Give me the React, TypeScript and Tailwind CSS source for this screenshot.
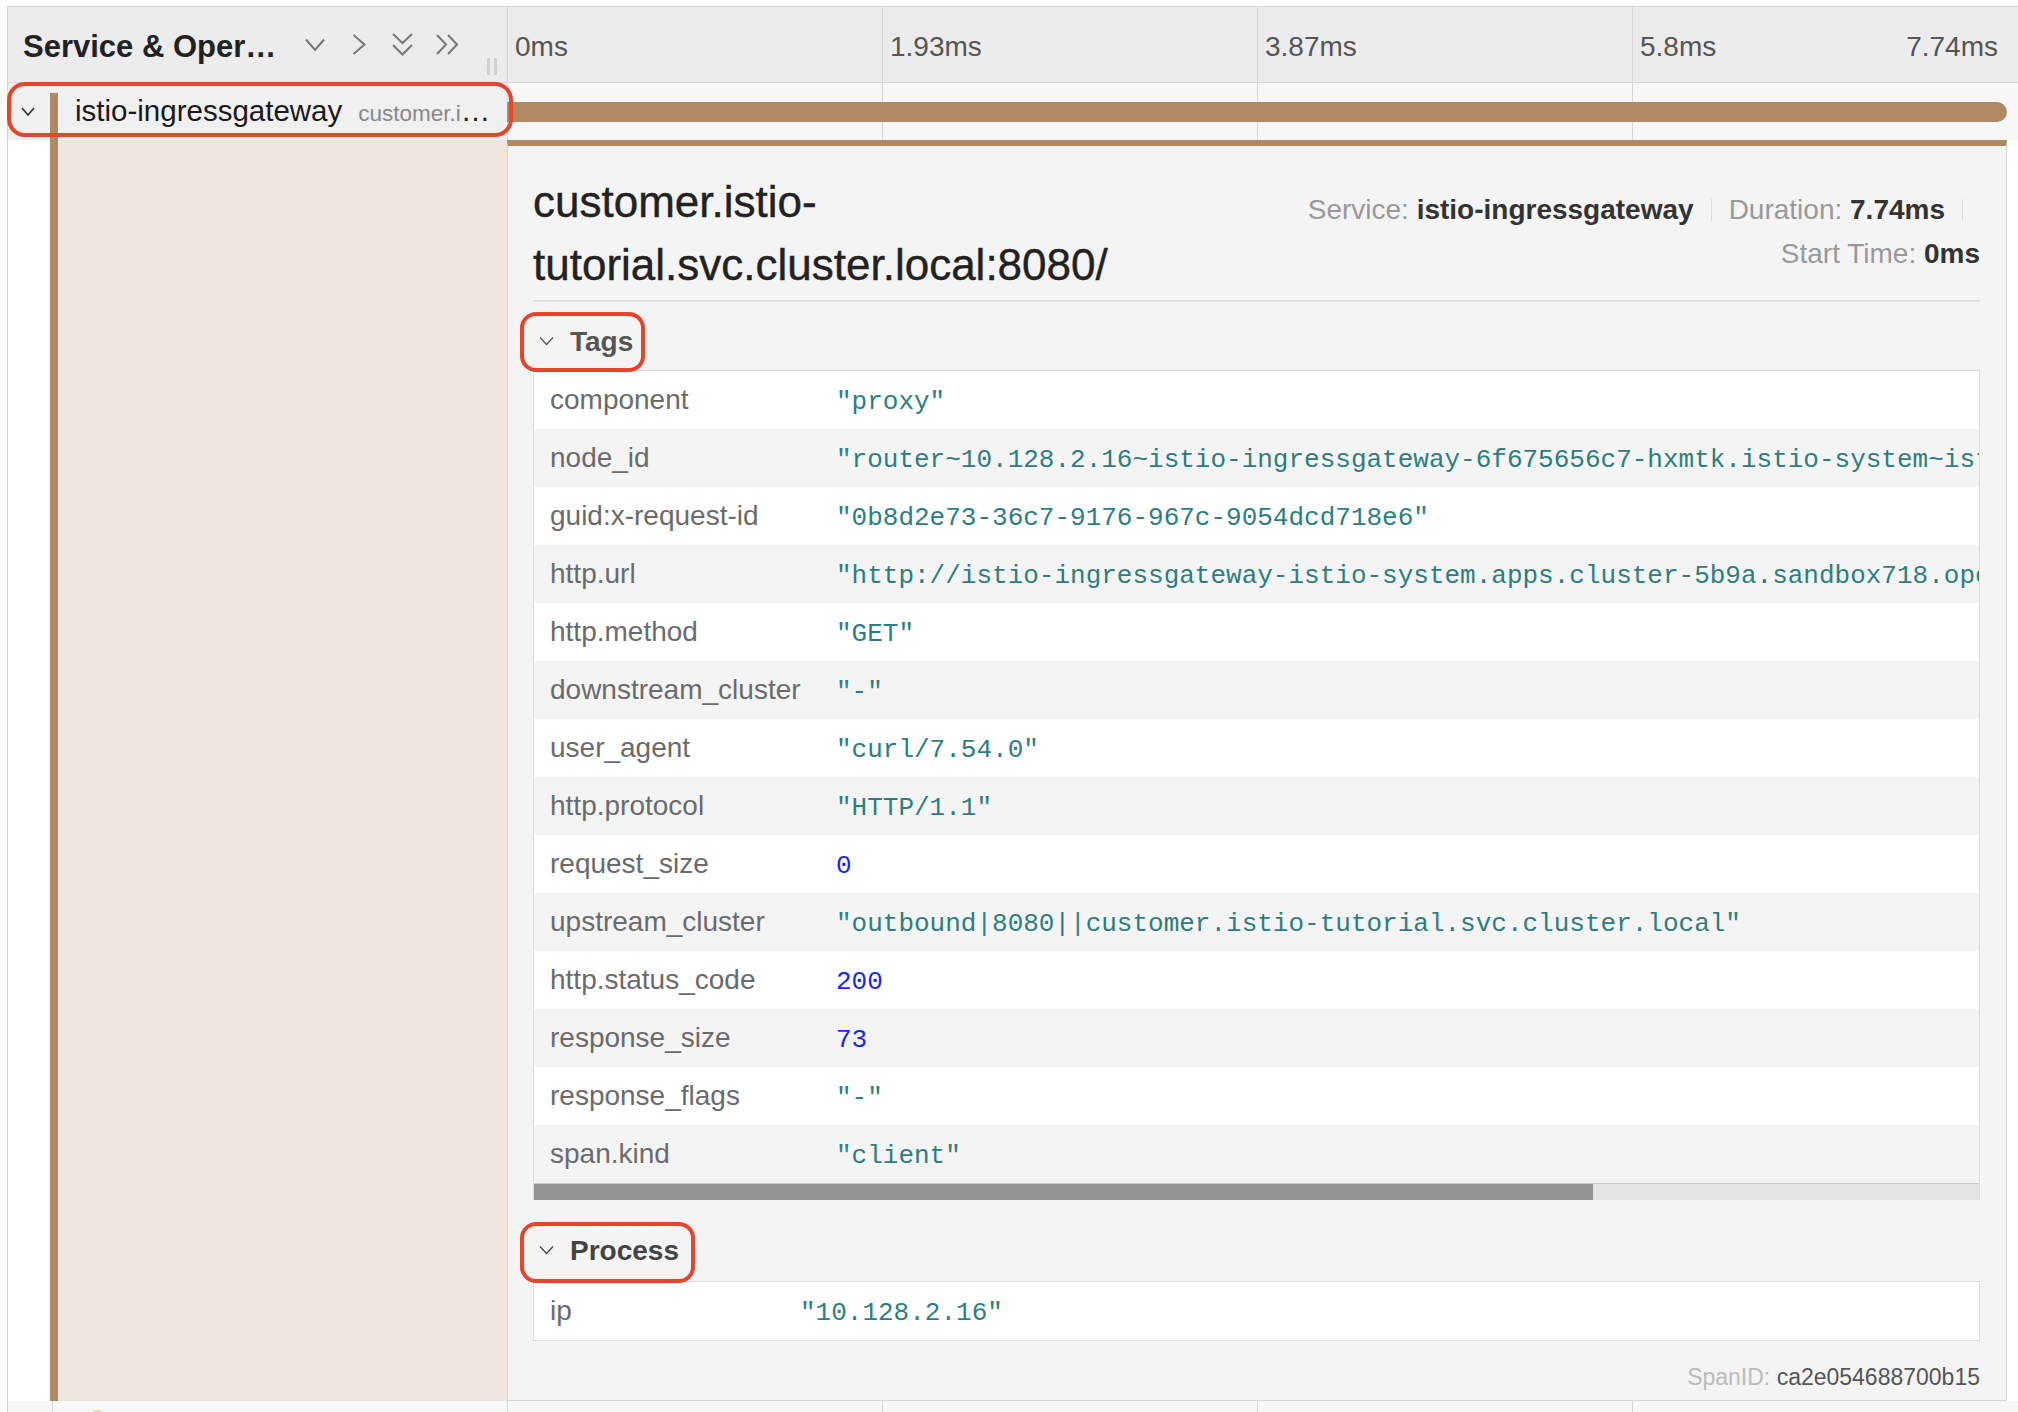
import React from "react";

type Tag = { k: string; v: string; num?: boolean };

const tags: Tag[] = [
  { k: "component", v: '"proxy"' },
  {
    k: "node_id",
    v: '"router~10.128.2.16~istio-ingressgateway-6f675656c7-hxmtk.istio-system~istio-system.svc.cluster.local"',
  },
  { k: "guid:x-request-id", v: '"0b8d2e73-36c7-9176-967c-9054dcd718e6"' },
  {
    k: "http.url",
    v: '"http://istio-ingressgateway-istio-system.apps.cluster-5b9a.sandbox718.opentlc.com/"',
  },
  { k: "http.method", v: '"GET"' },
  { k: "downstream_cluster", v: '"-"' },
  { k: "user_agent", v: '"curl/7.54.0"' },
  { k: "http.protocol", v: '"HTTP/1.1"' },
  { k: "request_size", v: "0", num: true },
  { k: "upstream_cluster", v: '"outbound|8080||customer.istio-tutorial.svc.cluster.local"' },
  { k: "http.status_code", v: "200", num: true },
  { k: "response_size", v: "73", num: true },
  { k: "response_flags", v: '"-"' },
  { k: "span.kind", v: '"client"' },
];

function SmallChevron({ className }: { className?: string }) {
  return (
    <svg className={className} width="15" height="10" viewBox="0 0 15 10" fill="none">
      <path d="M1 1.5 L7.5 8.5 L14 1.5" stroke="currentColor" strokeWidth="1.3" />
    </svg>
  );
}

function HeaderIcons() {
  return (
    <div className="flex items-center text-[#777]">
      <svg width="20" height="14" viewBox="0 0 20 14" fill="none" className="ml-[20px]">
        <path d="M1 1.5 L10 12 L19 1.5" stroke="currentColor" strokeWidth="2" />
      </svg>
      <svg width="14" height="21" viewBox="0 0 14 21" fill="none" className="ml-[27px]">
        <path d="M1.5 1 L12.5 10.5 L1.5 20" stroke="currentColor" strokeWidth="2" />
      </svg>
      <svg width="21" height="23" viewBox="0 0 21 23" fill="none" className="ml-[26px]">
        <path d="M1 1 L10.5 10 L20 1 M1 12 L10.5 21.5 L20 12" stroke="currentColor" strokeWidth="2" />
      </svg>
      <svg width="22" height="21" viewBox="0 0 22 21" fill="none" className="ml-[23px]">
        <path d="M1 1 L10 10.5 L1 20 M12 1 L21 10.5 L12 20" stroke="currentColor" strokeWidth="2" />
      </svg>
    </div>
  );
}

function KeyValueRow({ tag, striped, keyWidth }: { tag: Tag; striped: boolean; keyWidth: string }) {
  return (
    <div className={`flex h-[58px] items-center ${striped ? "bg-[#f4f4f4]" : "bg-white"}`}>
      <div className={`${keyWidth} shrink-0 pl-[16px] text-[28px] text-[#6b6b6b]`}>{tag.k}</div>
      <div
        className={`whitespace-nowrap pt-[4px] font-['Liberation_Mono',monospace] text-[26px] ${
          tag.num ? "text-[#1b26ee]" : "text-[#2c7f7e]"
        }`}
      >
        {tag.v}
      </div>
    </div>
  );
}

function TickLines() {
  return (
    <div className="grid h-full grid-cols-4">
      <div className="border-l border-[#d6d6d6]" />
      <div className="border-l border-[#d6d6d6]" />
      <div className="border-l border-[#d6d6d6]" />
      <div className="border-l border-[#d6d6d6]" />
    </div>
  );
}

export default function App() {
  return (
    <div className="min-h-screen overflow-hidden bg-white pl-[7px] pt-[6px] font-['Liberation_Sans',Arial,sans-serif]">
      <div className="border-l border-t border-[#d6d6d6]">
        {/* header */}
        <div className="flex h-[76px] border-b border-[#d6d6d6] bg-[#ececec]">
          <div className="flex w-[499px] shrink-0 items-center pl-[15px]">
            <div className="w-[262px] truncate pt-[5px] text-[31px] font-bold text-[#222]">
              Service &amp; Operation
            </div>
            <HeaderIcons />
            <div className="mb-[7px] ml-[29px] flex gap-[4px] self-end">
              <div className="h-[17px] w-[3px] bg-[#cfcfcf]" />
              <div className="h-[17px] w-[3px] bg-[#cfcfcf]" />
            </div>
          </div>
          <div className="flex-1 pr-[11px]">
            <div className="grid h-full grid-cols-4 text-[28px] leading-[32px] text-[#555]">
              <div className="border-l border-[#d6d6d6] pl-[7px] pt-[24px]">0ms</div>
              <div className="border-l border-[#d6d6d6] pl-[7px] pt-[24px]">1.93ms</div>
              <div className="border-l border-[#d6d6d6] pl-[7px] pt-[24px]">3.87ms</div>
              <div className="flex justify-between border-l border-[#d6d6d6] pl-[7px] pr-[9px] pt-[24px]">
                <span>5.8ms</span>
                <span>7.74ms</span>
              </div>
            </div>
          </div>
        </div>

        {/* span row */}
        <div className="flex h-[57px]">
          <div className="relative flex w-[499px] shrink-0 bg-[#f0f0f0]">
            <div className="flex items-center pl-[13px] text-[#333]">
              <svg width="14" height="9" viewBox="0 0 14 9" fill="none">
                <path d="M1 1 L7 8 L13 1" stroke="currentColor" strokeWidth="1.6" />
              </svg>
            </div>
            <div className="ml-[15px] mt-[10px] w-[8px] bg-[#af8963]" />
            <div className="ml-[17px] flex min-w-0 flex-1 items-center pr-[10px]">
              <div className="truncate text-[29.5px] text-[#1a1a1a]">
                istio-ingressgateway
                <span className="ml-[16px] text-[22.5px] text-[#888]">
                  customer.istio-tutorial.svc.cluster.local:8080/
                </span>
              </div>
            </div>
            <div className="pointer-events-none absolute left-[-1px] top-[-1px] z-10 h-[55px] w-[506px] rounded-[18px] border-4 border-[#e6452b]" />
          </div>
          <div className="flex-1 bg-[#f7f7f7] pr-[11px]">
            <div className="relative h-full">
              <TickLines />
              <div className="absolute left-0 right-0 top-[19px] h-[20px] rounded-r-[10px] bg-[#af8963]" />
            </div>
          </div>
        </div>

        {/* detail */}
        <div className="flex">
          <div className="flex w-[499px] shrink-0">
            <div className="w-[42px] bg-white" />
            <div className="w-[8px] bg-[#af8963]" />
            <div className="flex-1 bg-[#eee5df]" />
          </div>
          <div className="w-[1500px] border-x border-b border-t-[6px] border-[#d6d6d6] border-t-[#af8963] bg-[#f4f4f4] pb-[8px] pl-[25px] pr-[26px]">
            <div className="flex items-start border-b-2 border-[#e0e0e0] pb-[4px] pt-[24px]">
              <h2 className="min-w-0 flex-1 text-[44px] leading-[63px] text-[#222] [-webkit-text-stroke:0.4px_#222]">
                customer.istio-tutorial.svc.cluster.local:8080/
              </h2>
              <ul className="mt-[18px] flex w-[690px] shrink-0 flex-wrap justify-end text-[28px] leading-[44px] text-[#999]">
                <li className="flex items-center">
                  <span>
                    Service: <strong className="text-[#333]">istio-ingressgateway</strong>
                  </span>
                  <span className="mx-[17px] h-[22px] w-px bg-[#dcdcdc]" />
                </li>
                <li className="flex items-center">
                  <span>
                    Duration: <strong className="text-[#333]">7.74ms</strong>
                  </span>
                  <span className="mx-[17px] h-[22px] w-px bg-[#dcdcdc]" />
                </li>
                <li className="flex items-center">
                  <span>
                    Start Time: <strong className="text-[#333]">0ms</strong>
                  </span>
                </li>
              </ul>
            </div>

            <div className="relative z-10 -mb-[2px] ml-[-13px] mt-[10px] flex h-[60px] w-[125px] items-center rounded-[16px] border-4 border-[#e6452b] pl-[15px] text-[#555]">
              <SmallChevron className="mb-[3px]" />
              <span className="ml-[16px] text-[28px] font-bold">Tags</span>
            </div>
            <div className="border border-b-0 border-[#dcdcdc]">
              <div className="overflow-hidden">
                {tags.map((t, i) => (
                  <KeyValueRow key={t.k} tag={t} striped={i % 2 === 1} keyWidth="w-[302px]" />
                ))}
              </div>
              <div className="flex h-[17px] border-t border-[#c9c9c9] bg-[#e3e3e3]">
                <div className="w-[1059px] bg-[#939393]" />
              </div>
            </div>

            <div className="relative z-10 -mb-[2px] ml-[-13px] mt-[22px] flex h-[61px] w-[175px] items-center rounded-[16px] border-4 border-[#e6452b] pl-[15px] text-[#444]">
              <SmallChevron className="mb-[5px]" />
              <span className="mb-[4px] ml-[16px] text-[28px] font-bold">Process</span>
            </div>
            <div className="overflow-hidden border border-[#dcdcdc]">
              <KeyValueRow tag={{ k: "ip", v: '"10.128.2.16"' }} striped={false} keyWidth="w-[266px]" />
            </div>

            <div className="mt-[21px] text-right text-[23px] leading-[30px] text-[#bbb]">
              SpanID: <span className="text-[#555]">ca2e054688700b15</span>
            </div>
          </div>
        </div>

        {/* next row */}
        <div className="flex h-[40px]">
          <div className="flex w-[499px] shrink-0 bg-[#f7f7f7]">
            <div className="w-[45px] border-r border-[#d6d6d6]" />
            <div className="ml-[40px] mt-[9px] h-[20px] w-[8px] bg-[#f3d99a]" />
          </div>
          <div className="flex-1 bg-[#f7f7f7] pr-[11px]">
            <TickLines />
          </div>
        </div>
      </div>
    </div>
  );
}
